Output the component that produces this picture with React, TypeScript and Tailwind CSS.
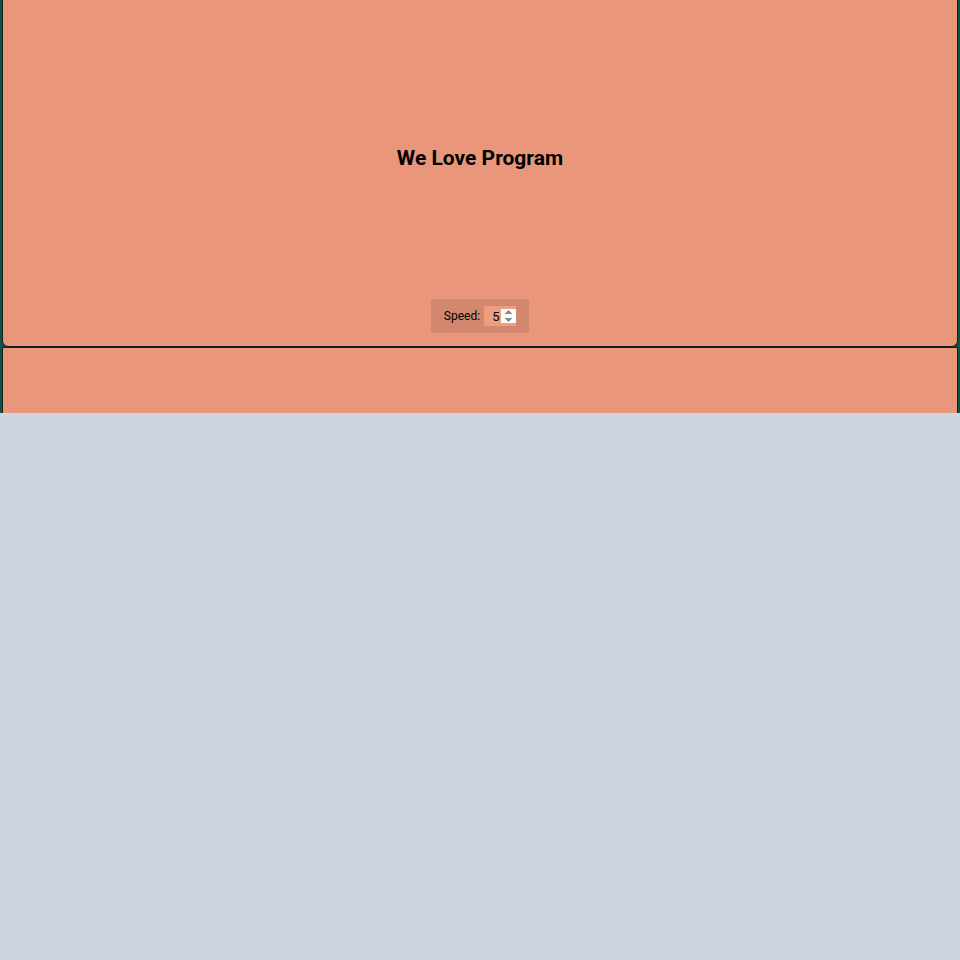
import { useState } from "react";

// Panel with a title and a speed control
export default function App() {
  const [speed, setSpeed] = useState(5);

  return (
    <div className="min-h-[960px] bg-[#cfd5e0] font-['Roboto',sans-serif]">
      <div className="h-[413px] bg-[#0c5546] px-[2px] overflow-hidden flex flex-col">
        <div className="h-[347px] bg-[#e9967a] rounded-b-[6px] border-b border-x border-[#14201c] flex flex-col items-center">
          <h1 className="pt-[144px] text-[21px] leading-[28px] font-bold text-black">
            We Love Program
          </h1>
          <div className="mt-auto mb-[13px] h-[34px] px-[13px] bg-[#d3876e] flex items-center gap-[4px] text-[12px] text-black">
            <span>Speed:</span>
            <input
              type="number"
              autoFocus
              value={speed}
              onChange={(e) => setSpeed(Number(e.target.value))}
              className="w-[32px] h-[20px] pl-[8px] bg-[#ec9d82] text-[13px] text-black outline-none caret-black"
            />
          </div>
        </div>
        <div className="flex-1 bg-[#e9967a] border-x border-t border-[#14201c]" />
      </div>
    </div>
  );
}
